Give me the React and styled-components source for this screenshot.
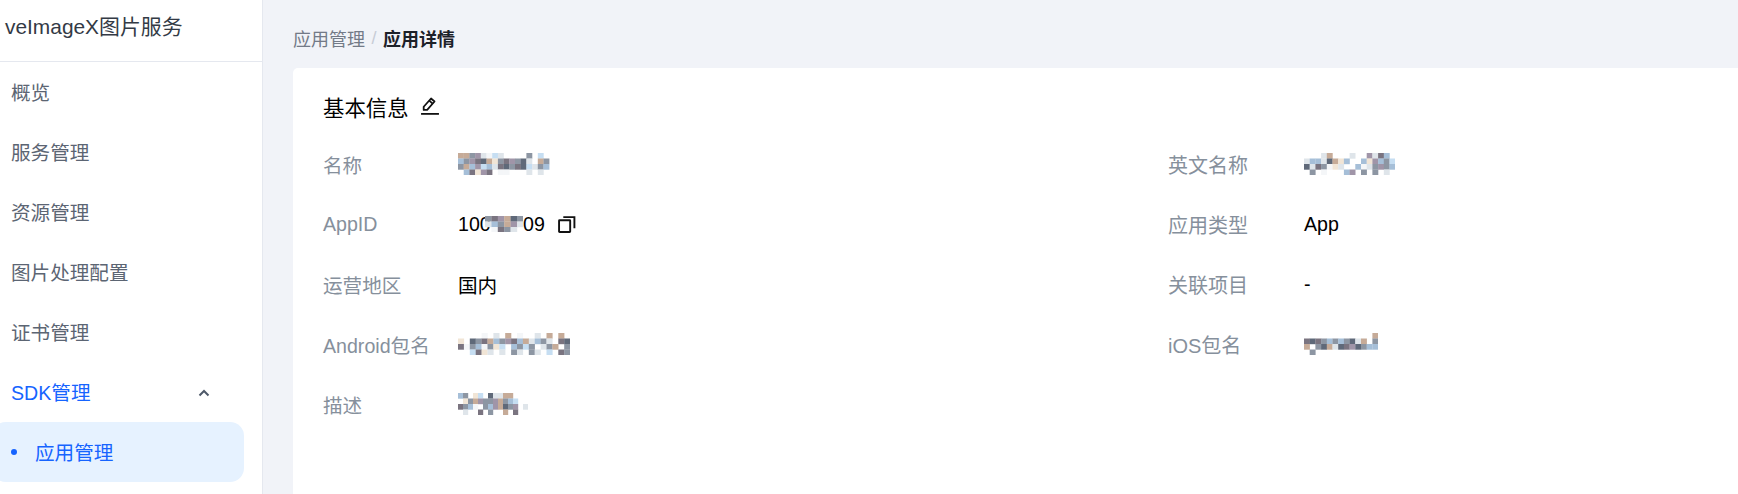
import React from 'react'
import styled, { createGlobalStyle } from 'styled-components'

const GlobalStyle = createGlobalStyle`
html, body {
margin:0;
padding:0;
height:100%;
overflow:hidden;
background:#f1f3f8;
}
#root {
height:100%;
}
`

const Page = styled.div`
display:flex;
width:1738px;
height:494px;
overflow:hidden;
font-family:"Liberation Sans","Noto Sans CJK SC",sans-serif;
font-size:19.6px;
`

const Sidebar = styled.aside`
width:262px;
flex-shrink:0;
background:#fff;
border-right:1px solid #e5e8ef;
`

const Brand = styled.div`
height:61px;
padding-left:5px;
line-height:54px;
font-size:20.9px;
color:#333a45;
border-bottom:1px solid #e5e8ef;
white-space:nowrap;
`

const Nav = styled.nav`
display:flex;
flex-direction:column;
padding-right:18px;
`

const NavItem = styled.div`
height:60px;
display:flex;
align-items:center;
justify-content:space-between;
padding:0 34px 2px 11px;
box-sizing:border-box;
color:${(p) => (p.$open ? '#1664ff' : '#5c6573')};
svg {
margin-top:3px;
}
`

const SubItem = styled.div`
height:60px;
margin-left:-8px;
padding:0 0 2px 19px;
box-sizing:border-box;
display:flex;
align-items:center;
gap:18px;
color:#1664ff;
background:#e6f2ff;
border-radius:14px;
`

const Dot = styled.span`
width:6px;
height:6px;
margin-top:2px;
border-radius:50%;
background:#1664ff;
`

const Main = styled.main`
flex:1;
min-width:0;
padding-left:30px;
`

const Crumbs = styled.div`
height:68px;
padding-top:8px;
box-sizing:border-box;
display:flex;
align-items:center;
gap:6.5px;
font-size:18px;
color:#737a87;
`

const CrumbSep = styled.span`
color:#c7ccd6;
`

const CrumbNow = styled.strong`
font-weight:700;
color:#1d2129;
`

const Card = styled.section`
height:426px;
padding:0 0 0 30px;
background:#fff;
border-radius:5px 0 0 0;
`

const CardTitle = styled.h2`
margin:0;
height:67px;
padding-top:9px;
box-sizing:border-box;
display:flex;
align-items:center;
gap:11px;
font-size:21.4px;
font-weight:400;
color:#000;
`

const Fields = styled.div`
display:grid;
grid-template-columns:845px 1fr;
grid-auto-rows:60.1px;
`

const Field = styled.div`
display:flex;
align-items:center;
padding-bottom:2px;
box-sizing:border-box;
`

const Label = styled.div`
width:${(p) => (p.$side ? '136px' : '135px')};
flex-shrink:0;
font-size:${(p) => (p.$side ? '20px' : '19.6px')};
color:#86909c;
white-space:nowrap;
`

const Value = styled.div`
display:flex;
align-items:center;
color:#000;
`

const CopyBtn = styled.svg`
margin-left:13px;
`

const Patch = styled.svg`
display:block;
flex-shrink:0;
margin-left:${(p) => p.$pull || 0}px;
`

// one letter for each colour of the blurred patches
const tones = {
  w: '#f4f6f8',
  l: '#dfe5ea',
  s: '#c6def2',
  b: '#a6bfd8',
  g: '#8d96a3',
  d: '#5f6979',
  t: '#c6ab98',
  c: '#f1e5d6',
  m: '#a095a8',
  k: '#7a7480',
}

const Mosaic = ({ rows, cell = 5.7, h = 5.5, pull }) => (
  <Patch $pull={pull} width={rows[0].length * cell} height={rows.length * h}>
    {rows.map((row, y) =>
      row.split('').map((ch, x) =>
        tones[ch] ? (
          <rect key={x + '-' + y} x={x * cell} y={y * h} width={cell + 0.2} height={h + 0.2} fill={tones[ch]} />
        ) : null
      )
    )}
  </Patch>
)

const Pencil = () => (
  <svg width="20" height="20" viewBox="0 0 19 19" fill="none" stroke="#111" strokeWidth="1.7">
    <path d="M3.5 13.2 L3.5 10.2 L10.5 2.4 L13.8 5.2 L6.8 13.2 Z" strokeLinejoin="round" />
    <path d="M8.8 4.4 L12 7.2" />
    <path d="M1 17 H18" />
  </svg>
)

const Copy = () => (
  <CopyBtn width="18" height="18" viewBox="0 0 17 17" fill="none" stroke="#111" strokeWidth="1.8">
    <rect x="1" y="5" width="10.5" height="11" rx="0.5" />
    <path d="M5 2 H15.5 V12.5" />
  </CopyBtn>
)

const Chevron = () => (
  <svg width="12" height="8" viewBox="0 0 12 8" fill="none" stroke="#4e5969" strokeWidth="2">
    <path d="M1.5 6.5 L6 2 L10.5 6.5" />
  </svg>
)

const nameBlur = ['ttgmlwsl....g.s..', 'bgmkdtcgkmgdl.tg.', 'gtbmsblkdgkdslgb.', '.bkcmk.ww...l.l..']
const enBlur = ['...lt...l..mlkb.', 'lbbldtcb..bcmbgs.', 'dlkgwcl..bwlgmgb.', '.g.w...bm.g.g.l..']
const appBlur = ['gkmtdg', 'lbgtml', '.wkgl.']
const androidBlur = ['....w.l.t.w..l.t.t.', 'c.dgktbgmkbtlbgl.kd', 'kwgbwgcs.bgsg.lgt.g', '..skcl.l.gl.gl.s.kg']
const iosBlur = ['............t', 'kdkgbgbgdlt.g', 't.gdtldkmdgbb', '.g...........']
const descBlur = ['bg.cs.dlltt...', '.cgtmggmtgbs..', 'kgbw.gbmtdgm.l', '.l..k.g..t.k..']

const left = [
  { label: '名称', value: <Mosaic rows={nameBlur} /> },
  {
    label: 'AppID',
    value: (
      <>
        100
        <Mosaic rows={appBlur} cell={6.4} pull={-6} />
        09
        <Copy />
      </>
    ),
  },
  { label: '运营地区', value: '国内' },
  { label: 'Android包名', value: <Mosaic rows={androidBlur} cell={5.9} /> },
  { label: '描述', value: <Mosaic rows={descBlur} cell={5} /> },
]

const right = [
  { label: '英文名称', value: <Mosaic rows={enBlur} />, side: true },
  { label: '应用类型', value: 'App', side: true },
  { label: '关联项目', value: '-', side: true },
  { label: 'iOS包名', value: <Mosaic rows={iosBlur} />, side: true },
]

const fields = left.flatMap((f, i) => (right[i] ? [f, right[i]] : [f]))

const App = () => {
  return (
    <Page>
      <GlobalStyle />
      <Sidebar>
        <Brand>veImageX图片服务</Brand>
        <Nav>
          <NavItem>概览</NavItem>
          <NavItem>服务管理</NavItem>
          <NavItem>资源管理</NavItem>
          <NavItem>图片处理配置</NavItem>
          <NavItem>证书管理</NavItem>
          <NavItem $open>
            SDK管理
            <Chevron />
          </NavItem>
          <SubItem>
            <Dot />
            应用管理
          </SubItem>
        </Nav>
      </Sidebar>
      <Main>
        <Crumbs>
          应用管理
          <CrumbSep>/</CrumbSep>
          <CrumbNow>应用详情</CrumbNow>
        </Crumbs>
        <Card>
          <CardTitle>
            基本信息
            <Pencil />
          </CardTitle>
          <Fields>
            {fields.map((f) => (
              <Field key={f.label}>
                <Label $side={f.side}>{f.label}</Label>
                <Value>{f.value}</Value>
              </Field>
            ))}
          </Fields>
        </Card>
      </Main>
    </Page>
  )
}

export default App
